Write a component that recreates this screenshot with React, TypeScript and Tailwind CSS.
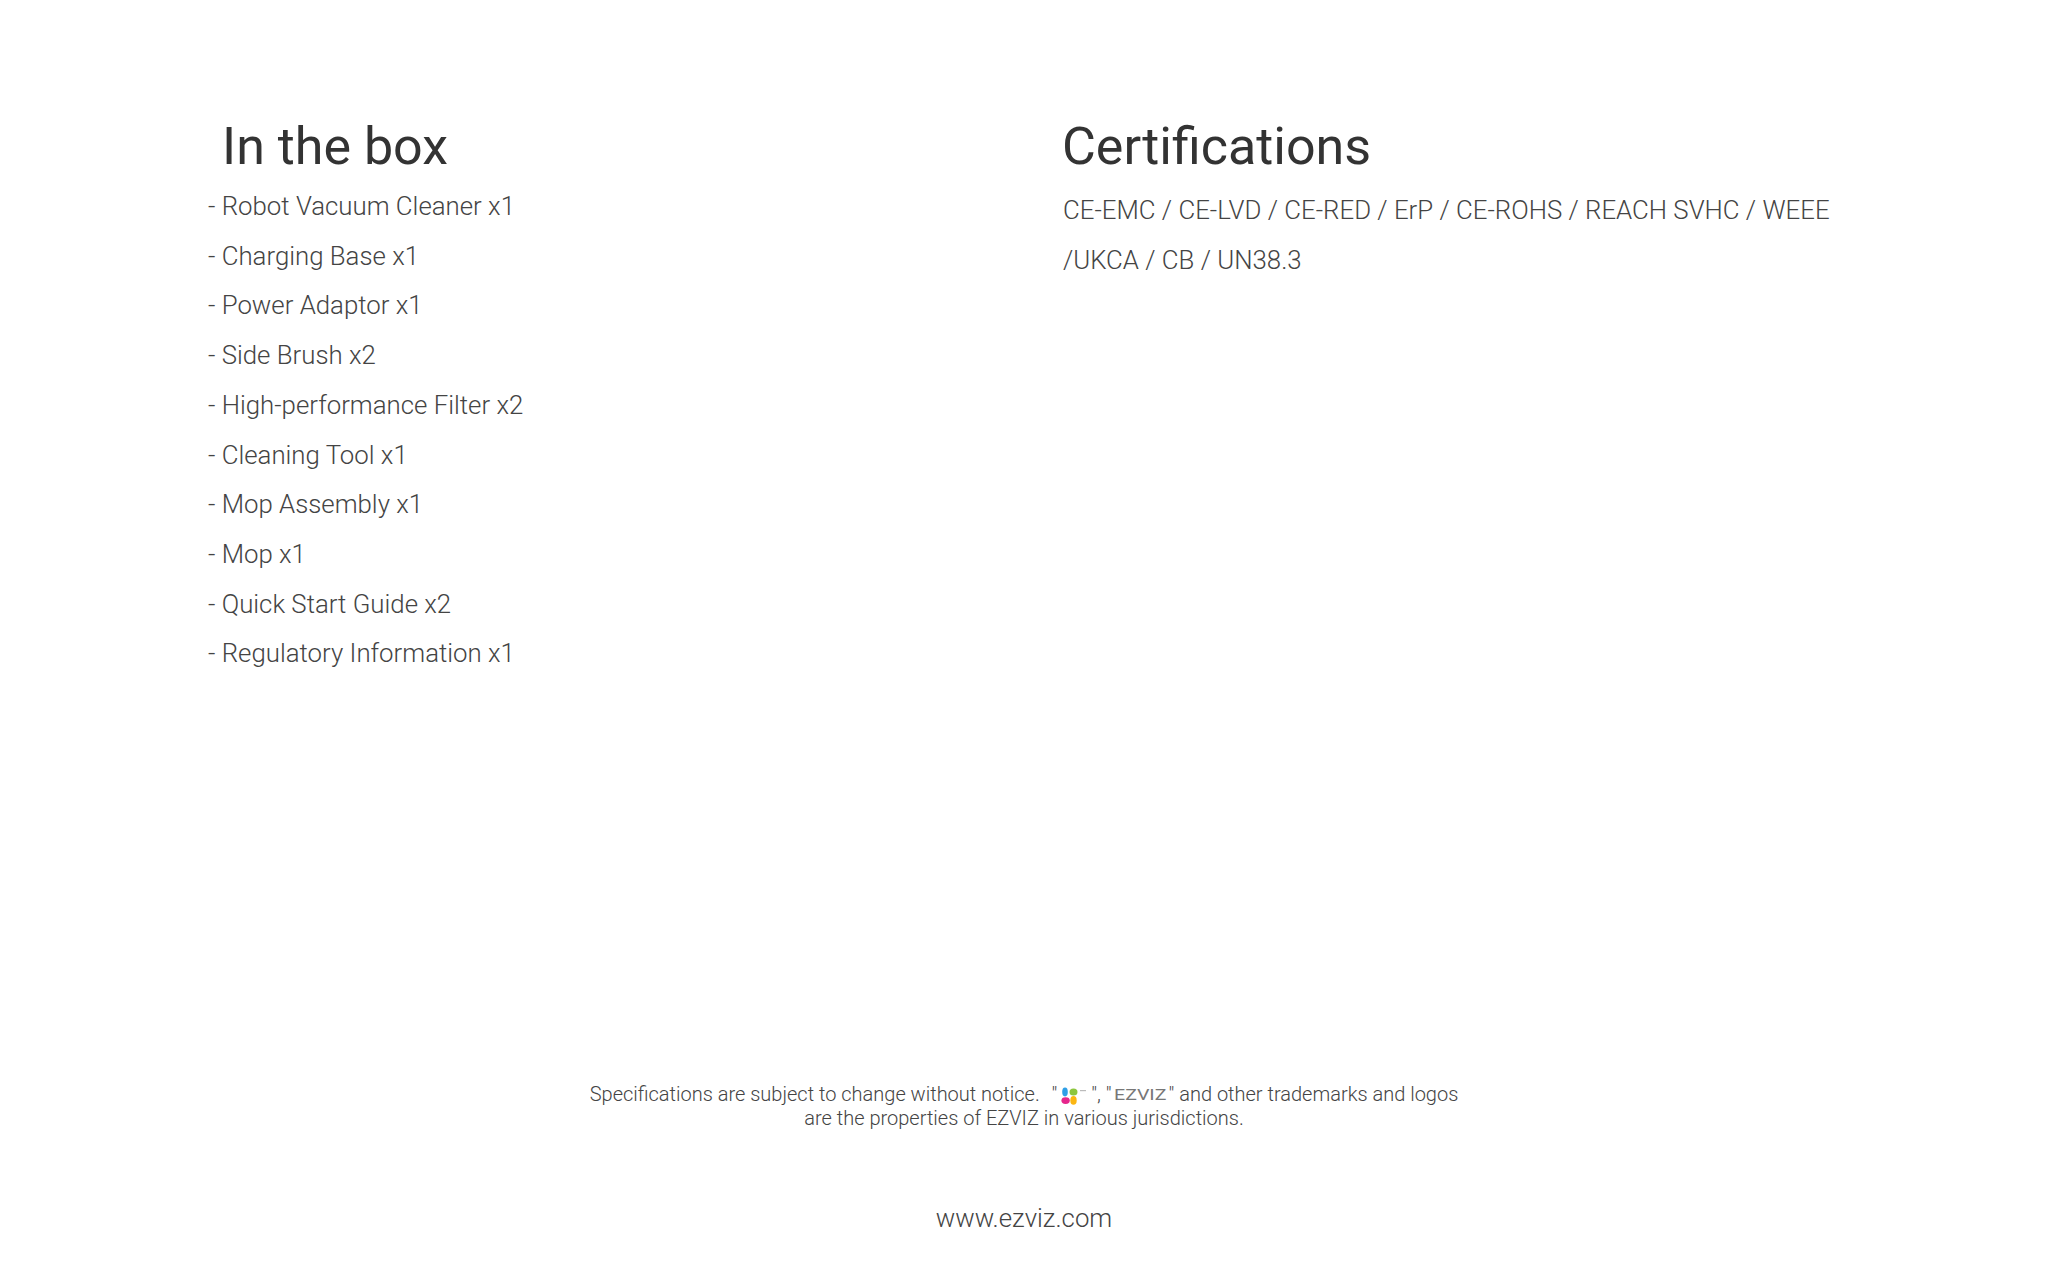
const items = [
  "- Robot Vacuum Cleaner x1",
  "- Charging Base x1",
  "- Power Adaptor x1",
  "- Side Brush x2",
  "- High-performance Filter x2",
  "- Cleaning Tool x1",
  "- Mop Assembly x1",
  "- Mop x1",
  "- Quick Start Guide x2",
  "- Regulatory Information x1",
];

function EzvizMark() {
  return (
    <svg viewBox="0 0 26 18" className="inline-block ml-[4px] mr-[4px] w-[26px] h-[18px] align-[-4px]">
      <ellipse cx="4" cy="5" rx="2.8" ry="4.4" fill="#2e9fe6" />
      <ellipse cx="12.5" cy="5" rx="4" ry="3.6" fill="#8cc63f" />
      <ellipse cx="4.6" cy="13.6" rx="4.2" ry="3.4" fill="#e6268c" />
      <ellipse cx="12.5" cy="13.4" rx="3.2" ry="4.4" fill="#fbb612" />
      <rect x="19" y="3" width="6" height="1.2" fill="#bbbbbb" />
    </svg>
  );
}

export default function App() {
  return (
    <div className="w-[2048px] h-[1280px] bg-white flex flex-col font-['Roboto',sans-serif] overflow-hidden">
      <div className="flex pt-[115px] h-[1082px] shrink-0">
        {/* In the box */}
        <section className="w-[1063px] pl-[208px] shrink-0">
          <h2 className="pl-[14px] text-[52px] leading-[64px] font-normal text-[#333333]">In the box</h2>
          <ul className="mt-[3px] text-[25.8px] leading-[49.7px] font-light text-[#444444]">
            {items.map((item) => (
              <li key={item}>{item}</li>
            ))}
          </ul>
        </section>

        {/* Certifications */}
        <section className="flex-1">
          <h2 className="-ml-[1px] text-[52px] leading-[64px] font-normal text-[#333333]">Certifications</h2>
          <p className="mt-[7px] whitespace-nowrap text-[25.8px] leading-[49.7px] font-light text-[#444444]">
            CE-EMC / CE-LVD / CE-RED / ErP / CE-ROHS / REACH SVHC / WEEE
            <br />
            /UKCA / CB / UN38.3
          </p>
        </section>
      </div>

      <footer className="text-center font-light text-[#444444]">
        <p className="text-[20px] leading-[24px]">
          Specifications are subject to change without notice.&nbsp;<span className="ml-[7px]">"</span>
          <EzvizMark />
          ", "
          <span className="inline-block w-[55px] ml-[2px] text-left align-[1px] leading-none whitespace-nowrap">
            <span className="inline-block origin-left scale-x-[1.4] text-[14px] font-normal text-[#777777]">EZVIZ</span>
          </span>
          " and other trademarks and logos
          <br />
          are the properties of EZVIZ in various jurisdictions.
        </p>
        <p className="mt-[72px] text-[25.8px] leading-[32px]">www.ezviz.com</p>
      </footer>
    </div>
  );
}
